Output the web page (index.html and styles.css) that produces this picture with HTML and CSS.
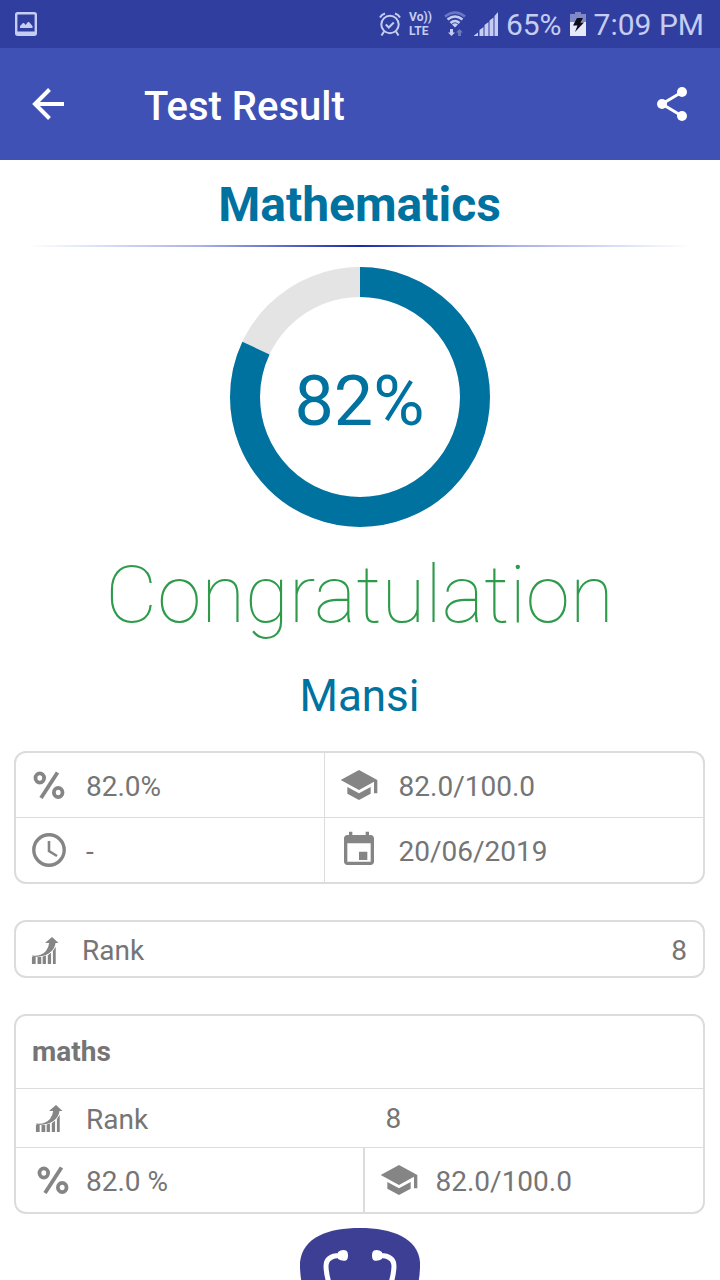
FILE: index.html
```html
<!DOCTYPE html>
<html lang="en">
<head>
  <meta charset="UTF-8">
  <meta name="viewport" content="width=device-width, initial-scale=1.0">
  <title>Test Result</title>
  <link rel="stylesheet" href="styles.css">
</head>
<body>
  <!-- shared icons -->
  <svg class="sprite" aria-hidden="true">
    <symbol id="percent" viewBox="0 0 32 28">
      <g fill="none" stroke="currentColor" stroke-width="3.800">
        <ellipse cx="6.800" cy="7" rx="4.300" ry="4.600"/>
        <ellipse cx="25.200" cy="21.500" rx="4.300" ry="4.600"/>
        <path d="M24.500 1.500L8 27"/>
      </g>
    </symbol>
    <symbol id="school" viewBox="0 0 24 24">
      <path d="M5 13.180v4L12 21l7-3.820v-4L12 17l-7-3.820zM12 3L1 9l11 6 9-4.910V17h2V9L12 3z"/>
    </symbol>
    <symbol id="chart" viewBox="0 0 30 30">
      <path d="M1 21q10 1 15-5q3-4 3.500-8.500h-4.500L22.500 1l7 6.500h-3.200q-1 7-7 11q-6 4-17.300 4z"/>
      <path d="M1 22.500h4V30H1zM7 22.500h4V30H7zM12.500 22l3.500-1v9h-3.500zM18 20.500l3.500-2.500v12H18zM23.500 16l3-4.500V30h-3z"/>
    </symbol>
  </svg>

  <div class="app">
    <div class="status-bar">
      <svg class="status-image" viewBox="0 0 22 24">
        <rect x="1.200" y="1.200" width="19.600" height="21.600" rx="1.500" fill="none" stroke="currentColor" stroke-width="2.400"/>
        <path d="M2 19.500h18v3H2zM5 16v-2l3-3h1l1.500 2L13 10h1l3.500 4v2z"/>
      </svg>
      <div class="status-info">
        <svg class="status-alarm" viewBox="0 0 22 24">
          <g fill="none" stroke="currentColor" stroke-width="2">
            <circle cx="11" cy="12.500" r="8.700"/>
            <path d="M6.800 12.500l3 3 5-5M1 5.500q1.500-3 5-4M21 5.500q-1.500-3-5-4M5 19.500l-2.500 4M17 19.500l2.500 4"/>
          </g>
        </svg>
        <div class="volte"><span>Vo))</span><span>LTE</span></div>
        <svg class="status-wifi" viewBox="0 0 22 26">
          <path d="M1 5.500q10-8 20 0" fill="none" stroke="currentColor" stroke-width="2.500" opacity=".4"/>
          <path d="M3.500 8.500q7.500-6 15 0M6.500 12q4.500-4 9 0" fill="none" stroke="currentColor" stroke-width="2.500"/>
          <path d="M8 13.500q3-2.300 6 0l-3 3zM6 18h3v3.500h2L7.500 25 4 21.500h2z"/>
          <path d="M15.500 18l3.500 3.500h-2V25h-3v-3.500h-2z" opacity=".4"/>
        </svg>
        <svg class="status-signal" viewBox="0 0 24 24">
          <path d="M0 23.500l4-3V24H0zM5.500 18l4-3v9h-4zM10.500 13l4-3v14h-4zM15.500 8.500l4-3V24h-4zM20.500 4L24 0v24h-3.500z"/>
        </svg>
        <span>65%</span>
        <svg class="status-battery" viewBox="0 0 16 24">
          <path d="M5 0h6v2h5v8H0V2h5z" fill="#8088c8"/>
          <path d="M0 10h16v14H0z" fill="#e6e9fa"/>
          <path d="M7 6h6l-2.500 4.500H14L5 20l2.500-6.500H3z" fill="#0c0e1c"/>
        </svg>
        <span>7:09 PM</span>
      </div>
    </div>

    <header class="app-bar">
      <button class="icon-button" type="button" aria-label="Back">
        <svg viewBox="0 0 48 48"><path d="M40 24H11M25.500 9.500L11 24l14.500 14.500" fill="none" stroke="currentColor" stroke-width="4"/></svg>
      </button>
      <h1 class="app-title">Test Result</h1>
      <button class="icon-button" type="button" aria-label="Share">
        <svg viewBox="0 0 48 48">
          <path d="M34 12L14 24l20 12" fill="none" stroke="currentColor" stroke-width="3"/>
          <circle cx="34" cy="12" r="5"/><circle cx="14" cy="24" r="5"/><circle cx="34" cy="36" r="5"/>
        </svg>
      </button>
    </header>

    <main class="content">
      <h2 class="subject">Mathematics</h2>
      <hr class="divider">

      <div class="score">
        <svg class="score-ring" viewBox="0 0 260 260">
          <circle class="ring-track" cx="130" cy="130" r="115"/>
          <circle class="ring-value" cx="130" cy="130" r="115" pathLength="100" stroke-dasharray="82 100" transform="rotate(-90 130 130)"/>
        </svg>
        <span class="score-text">82%</span>
      </div>

      <p class="message">Congratulation</p>
      <p class="student">Mansi</p>

      <section class="card">
        <div class="row split">
          <div class="cell"><svg class="icon"><use href="#percent"/></svg><span>82.0%</span></div>
          <div class="cell"><svg class="icon icon-large"><use href="#school"/></svg><span>82.0/100.0</span></div>
        </div>
        <div class="row split">
          <div class="cell">
            <svg class="icon icon-clock" viewBox="0 0 34 34">
              <path d="M17 8v10l8 5" fill="none" stroke="currentColor" stroke-width="2.600"/>
              <circle cx="17" cy="17" r="15.200" fill="none" stroke="currentColor" stroke-width="3.400"/>
            </svg>
            <span>-</span>
          </div>
          <div class="cell">
            <svg class="icon icon-large" viewBox="0 0 24 24"><path d="M17 13h-5v5h5v-5zM16 1v2H8V1H6v2H5c-1.110 0-1.990.9-1.990 2L3 19c0 1.100.89 2 2 2h14c1.100 0 2-.9 2-2V5c0-1.100-.9-2-2-2h-1V1h-2zm3 18H5V8h14v11z"/></svg>
            <span>20/06/2019</span>
          </div>
        </div>
      </section>

      <section class="card rank-card">
        <svg class="icon"><use href="#chart"/></svg>
        <span>Rank</span>
        <span class="rank-value">8</span>
      </section>

      <section class="card subject-card">
        <h3 class="card-title">maths</h3>
        <div class="row rank-row">
          <div class="cell"><svg class="icon"><use href="#chart"/></svg><span>Rank</span></div>
          <span>8</span>
        </div>
        <div class="row halves">
          <div class="cell"><svg class="icon"><use href="#percent"/></svg><span>82.0 %</span></div>
          <div class="cell"><svg class="icon icon-large"><use href="#school"/></svg><span>82.0/100.0</span></div>
        </div>
      </section>

      <svg class="logo" viewBox="0 0 120 120">
        <path d="M60 0C92 0 118 10 120 34C121 65 104 120 60 120S-1 65 0 34C3 9 28 0 60 0z" fill="#3d3f94"/>
        <g fill="none" stroke="#fff" stroke-width="5">
          <path d="M40 27.500q-14 0-14 11 2 36 34 38M80 27.500q14 0 14 11-2 36-34 38"/>
        </g>
        <path d="M38 24q4-3 8-1.500 2 1 2 5t-2 5q-4 1-8-1.500zM82 24q-4-3-8-1.500-2 1-2 5t2 5q4 1 8-1.500z" fill="#fff"/>
      </svg>
    </main>
  </div>
</body>
</html>
```

FILE: styles.css
```css
* {
  box-sizing: border-box;
}
body {
  margin: 0;
  font-family: Roboto, "Liberation Sans", sans-serif;
  color: #757575;
  background-color: #fff;
}
h1, h2, h3, p {
  margin: 0;
}
svg {
  display: block;
  flex-shrink: 0;
  fill: currentColor;
}
.sprite {
  display: none;
}
.app {
  display: flex;
  flex-direction: column;
  height: 100vh;
  overflow: hidden;
}

/* status bar */
.status-bar {
  display: flex;
  flex-shrink: 0;
  align-items: center;
  justify-content: space-between;
  height: 48px;
  padding: 0 16px 0 15px;
  background-color: #303f9f;
  color: #c5cdf2;
  font-size: 30px;
}
.status-image {
  width: 22px;
  height: 24px;
}
.status-info {
  display: flex;
  align-items: center;
  gap: 8px;
}
.status-alarm {
  width: 22px;
  height: 24px;
}
.volte {
  display: flex;
  flex-direction: column;
  margin-right: 4px;
  font-size: 12px;
  font-weight: 700;
  line-height: 14px;
}
.status-wifi {
  width: 22px;
  height: 26px;
}
.status-signal {
  width: 24px;
  height: 24px;
}
.status-battery {
  width: 16px;
  height: 24px;
}

/* app bar */
.app-bar {
  display: flex;
  flex-shrink: 0;
  align-items: center;
  height: 112px;
  padding: 0 24px;
  background-color: #3f51b5;
  color: #fff;
}
.icon-button {
  width: 48px;
  height: 48px;
  padding: 0;
  border: none;
  background: none;
  color: inherit;
  cursor: pointer;
}
.app-title {
  flex: 1;
  padding: 4px 0 0 72px;
  font-size: 40px;
  font-weight: 500;
}

/* result */
.content {
  display: flex;
  flex: 1;
  flex-direction: column;
  min-height: 0;
  padding: 17px 15px 0 14px;
}
.subject {
  color: #0072a0;
  font-size: 48px;
  font-weight: 700;
  line-height: 56px;
  text-align: center;
}
.divider {
  flex-shrink: 0;
  width: 100%;
  height: 2px;
  margin: 12px 0 20px;
  border: none;
  background: linear-gradient(to right, transparent 2%, #a9b2ea 27%, #1a2aa8 50%, #a9b2ea 73%, transparent 98%);
}
.score {
  display: grid;
  place-items: center;
}
.score-ring, .score-text {
  grid-area: 1 / 1;
}
.score-ring {
  width: 260px;
  height: 260px;
  fill: none;
  stroke-width: 30px;
}
.ring-track {
  stroke: #e4e4e4;
}
.ring-value {
  stroke: #0072a0;
}
.score-text {
  padding-top: 8px;
  color: #0072a0;
  font-size: 70px;
}
.message {
  margin-top: 21px;
  color: #2e9b4b;
  font-size: 80px;
  font-weight: 100;
  line-height: 94px;
  text-align: center;
}
.student {
  margin: 28px 0 29px;
  color: #0072a0;
  font-size: 44px;
  line-height: 52px;
  text-align: center;
}

/* cards */
.card {
  flex-shrink: 0;
  margin-bottom: 36px;
  border: 2px solid #dcdcdc;
  border-radius: 12px;
  font-size: 28px;
}
.row {
  display: grid;
  align-items: stretch;
}
.row + .row, .card-title + .row {
  border-top: 1px solid #dcdcdc;
}
.cell {
  display: flex;
  align-items: center;
  padding: 0 14px;
  gap: 20px;
}
.cell:first-child {
  padding-left: 16px;
}
.cell span {
  padding-top: 2px;
}
.split {
  grid-template-columns: 308fr 380fr;
}
.split .cell {
  min-height: 64px;
}
.split .cell + .cell {
  border-left: 1px solid #dcdcdc;
}
.icon {
  width: 34px;
  height: 28px;
  color: #858585;
}
.icon-large {
  width: 40px;
  height: 40px;
}
.icon-clock {
  height: 34px;
}
.rank-card {
  display: flex;
  align-items: center;
  min-height: 58px;
  padding: 2px 16px 0 12px;
  gap: 20px;
}
.rank-value {
  margin-left: auto;
}
.subject-card {
  margin-bottom: 14px;
}
.card-title {
  padding: 0 16px;
  font-size: 28px;
  font-weight: 700;
  line-height: 72px;
}
.rank-row {
  grid-template-columns: 370fr 318fr;
  align-items: center;
  min-height: 59px;
}
.halves {
  grid-template-columns: 348fr 340fr;
  min-height: 65px;
}
.halves .cell {
  gap: 16px;
}
.halves .cell:first-child {
  padding-left: 20px;
}
.halves .cell + .cell {
  border-left: 2px solid #dcdcdc;
}
.logo {
  align-self: center;
  width: 120px;
  height: 120px;
}
```
